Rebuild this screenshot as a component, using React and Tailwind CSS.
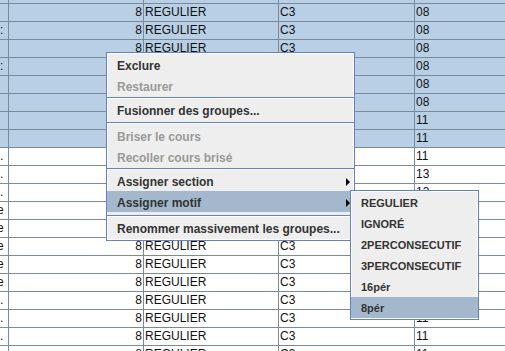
import React from 'react';

// Rows of the table, top partial row first (only its bottom 3px show).
const rows = [
  { sel: true, c0: '', c4: '', empty: true },
  { sel: true, c0: '', c4: '08' },
  { sel: true, c0: ':', c4: '08' },
  { sel: true, c0: '', c4: '08' },
  { sel: true, c0: ':', c4: '08' },
  { sel: true, c0: '', c4: '08' },
  { sel: true, c0: '', c4: '08' },
  { sel: true, c0: '', c4: '11' },
  { sel: true, c0: '', c4: '11' },
  { sel: false, c0: '.', c4: '11' },
  { sel: false, c0: '.', c4: '13' },
  { sel: false, c0: '.', c4: '13' },
  { sel: false, c0: 'e', c4: '13' },
  { sel: false, c0: 'e', c4: '13' },
  { sel: false, c0: 'e', c4: '13' },
  { sel: false, c0: 'e', c4: '11' },
  { sel: false, c0: 'e', c4: '11' },
  { sel: false, c0: '.', c4: '11' },
  { sel: false, c0: '.', c4: '11' },
  { sel: false, c0: '.', c4: '11' },
  { sel: false, c0: '.', c4: '11' },
];

function Row({ r }) {
  return (
    <div
      className={`flex h-[18px] shrink-0 border-b border-[#7a8a99] leading-[17px] ${
        r.sel ? 'bg-[#b8cfe5]' : 'bg-white'
      }`}
    >
      <div className="w-[9px] shrink-0 overflow-hidden border-r border-[#7a8a99] whitespace-nowrap">
        <span className={r.c0 === 'e' ? '-ml-[3px] inline-block' : ''}>{r.c0}</span>
      </div>
      <div className="w-[135px] shrink-0 border-r border-[#7a8a99] pr-[1px] text-right">
        {r.empty ? '' : '8'}
      </div>
      <div className="w-[135px] shrink-0 border-r border-[#7a8a99] pl-[1px]">
        {r.empty ? '' : 'REGULIER'}
      </div>
      <div className="w-[136px] shrink-0 border-r border-[#7a8a99] pl-[1px]">
        {r.empty ? '' : 'C3'}
      </div>
      <div className="flex-1 pl-[1px]">{r.c4}</div>
    </div>
  );
}

function Arrow() {
  return (
    <svg width="4" height="8" viewBox="0 0 4 8" className="shrink-0">
      <path d="M0 0L4 4L0 8Z" fill="#000" />
    </svg>
  );
}

function Item({ label, disabled, active, arrow }) {
  return (
    <div
      className={`flex h-[21px] items-center pt-[2px] pl-[10px] pr-[4px] whitespace-nowrap ${
        active ? 'bg-[#a3b8cc]' : ''
      } ${disabled ? 'text-[#999999]' : 'text-[#333333]'}`}
    >
      <span className="flex-1">{label}</span>
      {arrow && <Arrow />}
    </div>
  );
}

function Sep({ className }) {
  return (
    <div className={className}>
      <div className="h-[2px] border-t border-b border-t-[#6382bf] border-b-white" />
    </div>
  );
}

export default function App() {
  return (
    <div className="relative h-[351px] w-[505px] overflow-hidden bg-white font-[Liberation_Sans,Arial,sans-serif] text-[12px] text-[#111]">
      <div className="-mt-[14px] flex flex-col">
        {rows.map((r, i) => (
          <Row key={i} r={r} />
        ))}
      </div>

      {/* Context menu */}
      <div className="absolute left-[106px] top-[52px] w-[249px] border border-[#6382bf] bg-[#eeeeee] pt-[1px] pb-[2px] font-bold shadow-[inset_0_0_0_1px_#fff]">
        <Item label="Exclure" />
        <Item label="Restaurer" disabled />
        <Sep className="h-[3px] pt-[1px]" />
        <Item label="Fusionner des groupes..." />
        <Sep className="h-[5px] pt-[2px]" />
        <Item label="Briser le cours" disabled />
        <Item label="Recoller cours brisé" disabled />
        <Sep className="h-[3px] pt-[1px]" />
        <Item label="Assigner section" arrow />
        <Item label="Assigner motif" arrow active />
        <Sep className="h-[5px] pt-[3px]" />
        <Item label="Renommer massivement les groupes..." />
      </div>

      {/* Submenu */}
      <div className="absolute left-[350px] top-[190px] w-[129px] border border-[#6382bf] bg-[#eeeeee] pt-[1px] pb-[1px] text-[11px] font-bold shadow-[inset_0_0_0_1px_#fff]">
        <Item label="REGULIER" />
        <Item label="IGNORÉ" />
        <Item label="2PERCONSECUTIF" />
        <Item label="3PERCONSECUTIF" />
        <Item label="16pér" />
        <Item label="8pér" active />
      </div>
    </div>
  );
}
